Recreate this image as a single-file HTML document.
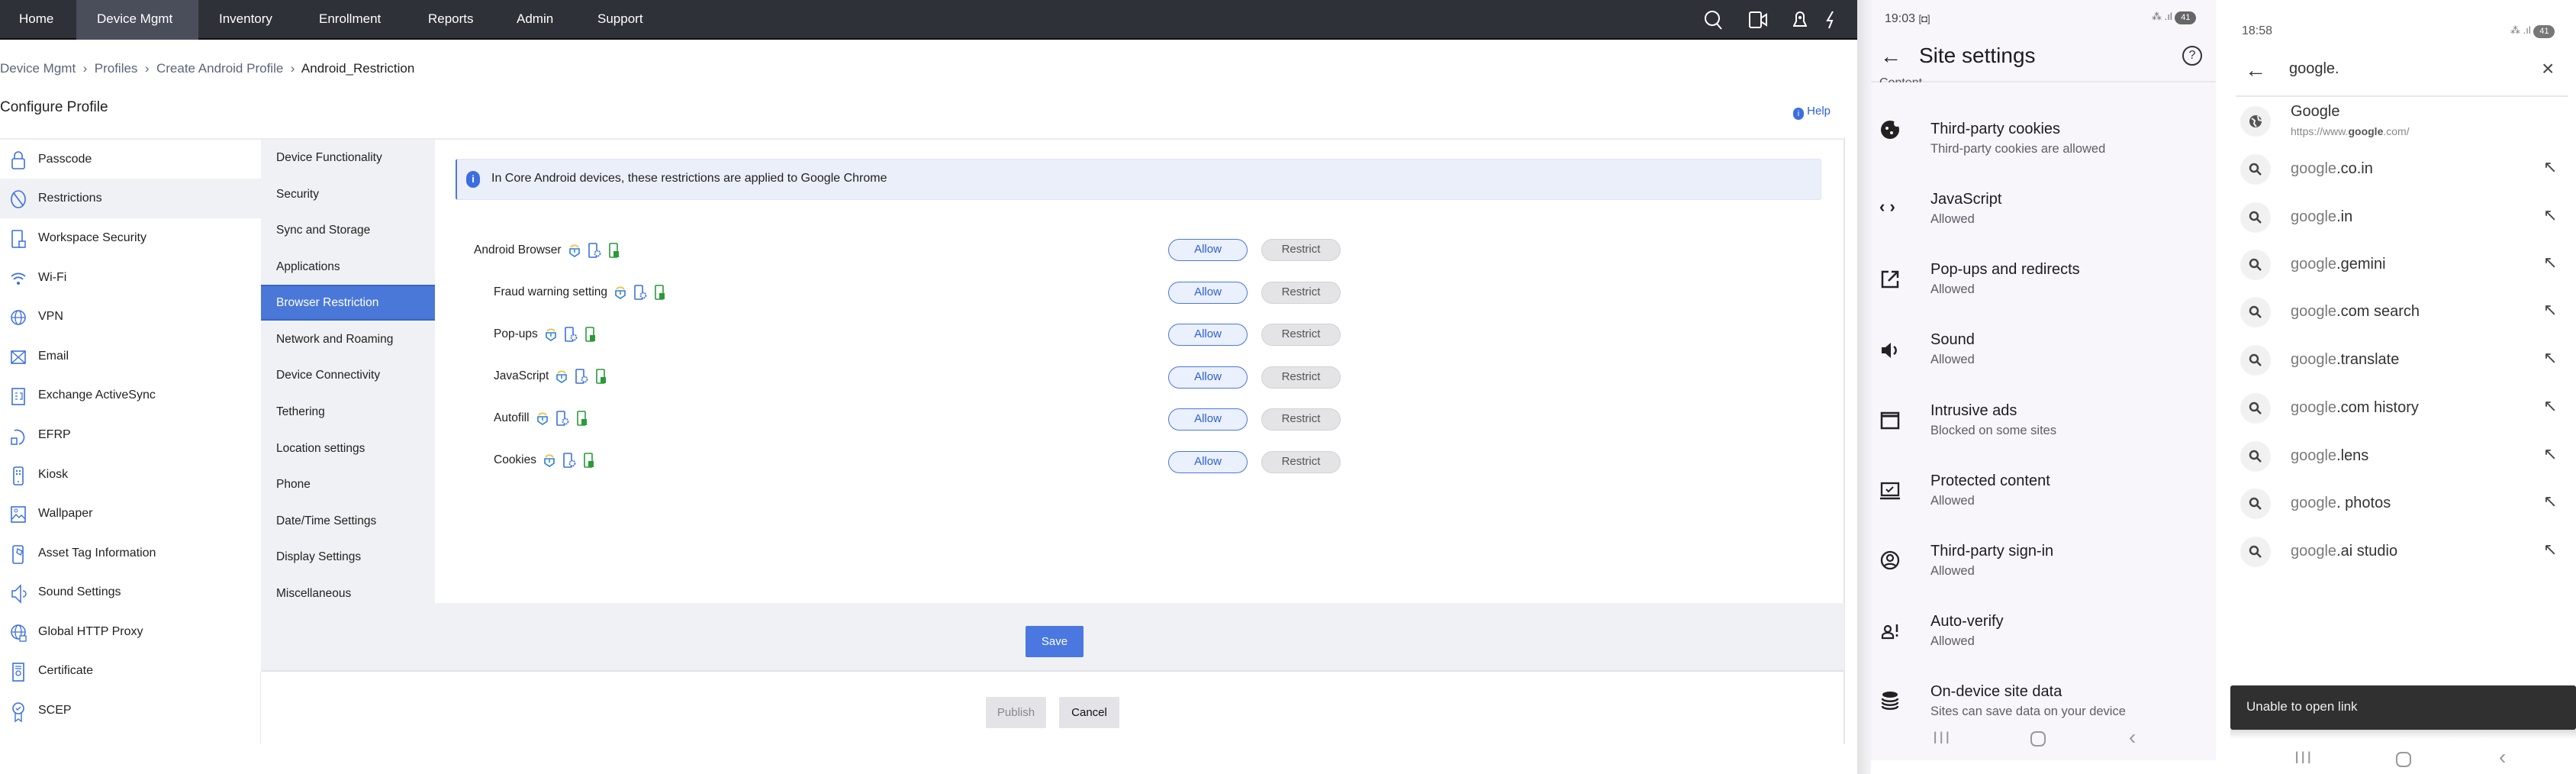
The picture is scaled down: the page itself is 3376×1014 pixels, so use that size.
<!DOCTYPE html>
<html><head><meta charset="utf-8"><style>
*{margin:0;padding:0;box-sizing:border-box}
body{width:3376px;height:1014px;position:relative;overflow:hidden;background:#fff;font-family:"Liberation Sans",sans-serif;color:#222}
.a{position:absolute;white-space:nowrap}
.nav{left:0;top:0;width:2434px;height:52px;background:#2f3138;border-bottom:2px solid #111}
.nav span{position:absolute;top:15px;color:#fff;font-size:17px}
.li{position:absolute;left:0;width:342px;height:52px;font-size:16px}
.li span{position:absolute;left:50px;top:17px}
.li svg{position:absolute;left:13px;top:14px}
.c2{position:absolute;left:342px;width:228px;height:47px;font-size:15.5px}
.c2 span{position:absolute;left:20px;top:15px}
.row{position:absolute;font-size:15.5px;height:30px}
.ic{display:inline-block;vertical-align:middle;margin-left:9px}
.btnA{position:absolute;left:1531px;width:104px;height:29px;border:1.5px solid #4a78e0;background:#eaf0fc;border-radius:15px;color:#2d5fd6;font-size:15px;text-align:center;line-height:26px}
.btnR{position:absolute;left:1653px;width:104px;height:29px;border:1.5px solid #d2d2d6;background:#e4e4e7;border-radius:15px;color:#555;font-size:15px;text-align:center;line-height:26px}
.p1t{position:absolute;left:2530px;font-size:20px;color:#1d1b20}
.p1s{position:absolute;left:2530px;font-size:16.5px;color:#5f5c66}
.sg{position:absolute;left:3002px;font-size:20px;color:#333}
.sg i{font-style:normal;color:#7a7a7a}
.cir{position:absolute;left:2936px;width:40px;height:40px;border-radius:20px;background:#f1f1f1}
.arr{position:absolute;left:3333px;font-size:22px;color:#444}
</style></head><body>

<div class="a nav">
 <div style="position:absolute;left:100px;top:0;width:160px;height:52px;background:#4a4e5a"></div>
 <span style="left:25px">Home</span>
 <span style="left:127px">Device Mgmt</span>
 <span style="left:287px">Inventory</span>
 <span style="left:418px">Enrollment</span>
 <span style="left:561px">Reports</span>
 <span style="left:677px">Admin</span>
 <span style="left:783px">Support</span>
 <svg style="position:absolute;left:2233px;top:12px" width="26" height="28" viewBox="0 0 26 28"><circle cx="11" cy="12" r="9" fill="none" stroke="#fff" stroke-width="2"/><path d="M17 19l6 7" stroke="#fff" stroke-width="2"/></svg>
 <svg style="position:absolute;left:2292px;top:14px" width="26" height="24"><rect x="1" y="2" width="15" height="20" rx="2" fill="none" stroke="#fff" stroke-width="2"/><path d="M17 9l6-4v14l-6-4" fill="none" stroke="#fff" stroke-width="2"/></svg>
 <svg style="position:absolute;left:2350px;top:14px" width="18" height="24"><path d="M9 2a5 5 0 0 1 5 5v7l3 6H1l3-6V7a5 5 0 0 1 5-5z" fill="none" stroke="#fff" stroke-width="2"/><circle cx="9" cy="9" r="2" fill="#fff"/></svg>
 <svg style="position:absolute;left:2392px;top:14px" width="14" height="24"><path d="M10 1L3 13h6l-4 10" fill="none" stroke="#fff" stroke-width="2"/></svg>
</div>

<div class="a" style="left:0;top:80px;font-size:17px;color:#5a6478">Device Mgmt &nbsp;›&nbsp; Profiles &nbsp;›&nbsp; Create Android Profile &nbsp;›&nbsp; <span style="color:#222">Android_Restriction</span></div>
<div class="a" style="left:0;top:130px;font-size:19px;color:#222">Configure Profile</div>
<div class="a" style="left:2350px;top:137px;font-size:15px;color:#2d5fd6"><span style="display:inline-block;width:14px;height:16px;border-radius:8px;background:#3b6fe0;color:#fff;font-size:11px;text-align:center;line-height:16px;vertical-align:-2px">i</span> Help</div>

<!-- panel -->
<div class="a" style="left:0;top:181px;width:2418px;height:2px;background:#ececee"></div>
<div class="a" style="left:2416px;top:181px;width:2px;height:794px;background:#e6e6e8"></div>
<div class="a" style="left:342px;top:183px;width:228px;height:607px;background:#f0f1f4"></div>
<div class="a" style="left:342px;top:790px;width:2075px;height:90px;background:#f0f1f4;border-bottom:2px solid #e2e3e7"></div>
<div class="a" style="left:341px;top:880px;width:1px;height:95px;background:#e8e8ea"></div>

<!-- left list -->
<div class="li" style="top:183px"><svg width="22" height="26"><rect x="3" y="11" width="16" height="13" rx="2" fill="none" stroke="#3b6fe0" stroke-width="1.6"/><path d="M6 11V7a5 5 0 0 1 10 0v4" fill="none" stroke="#3b6fe0" stroke-width="1.6"/></svg><span>Passcode</span></div>
<div class="li" style="top:234px;background:#f0f1f4"><svg width="22" height="26"><ellipse cx="11" cy="13" rx="9" ry="11" fill="none" stroke="#3b6fe0" stroke-width="1.6"/><path d="M5 5l12 16" stroke="#3b6fe0" stroke-width="1.6"/></svg><span>Restrictions</span></div>
<div class="li" style="top:286px"><svg width="22" height="28"><rect x="3" y="2" width="13" height="22" rx="1" fill="none" stroke="#3b6fe0" stroke-width="1.6"/><rect x="12" y="16" width="8" height="8" fill="#fff" stroke="#3b6fe0" stroke-width="1.5"/></svg><span>Workspace Security</span></div>
<div class="li" style="top:338px"><svg width="22" height="26"><path d="M2 10a13 13 0 0 1 18 0M5 14a8 8 0 0 1 12 0" fill="none" stroke="#3b6fe0" stroke-width="1.8"/><circle cx="11" cy="19" r="2" fill="#3b6fe0"/></svg><span>Wi-Fi</span></div>
<div class="li" style="top:389px"><svg width="22" height="26"><circle cx="11" cy="13" r="9" fill="none" stroke="#3b6fe0" stroke-width="1.5"/><ellipse cx="11" cy="13" rx="4" ry="9" fill="none" stroke="#3b6fe0" stroke-width="1.3"/><path d="M2 13h18" stroke="#3b6fe0" stroke-width="1.3"/></svg><span>VPN</span></div>
<div class="li" style="top:441px"><svg width="22" height="26"><rect x="2" y="5" width="18" height="16" fill="none" stroke="#3b6fe0" stroke-width="1.6"/><path d="M2 5l18 16M20 5L2 21" stroke="#3b6fe0" stroke-width="1.4"/></svg><span>Email</span></div>
<div class="li" style="top:492px"><svg width="22" height="26"><rect x="3" y="3" width="16" height="21" fill="none" stroke="#3b6fe0" stroke-width="1.6"/><path d="M7 9h3M7 13h3M7 17h3M13 9h3v8h-3" stroke="#3b6fe0" stroke-width="1.3" fill="none"/></svg><span>Exchange ActiveSync</span></div>
<div class="li" style="top:544px"><svg width="22" height="28"><path d="M6 6a8 8 0 1 1 6 18" fill="none" stroke="#3b6fe0" stroke-width="1.6"/><rect x="2" y="16" width="7" height="8" fill="none" stroke="#3b6fe0" stroke-width="1.5"/></svg><span>EFRP</span></div>
<div class="li" style="top:596px"><svg width="22" height="28"><rect x="5" y="2" width="12" height="23" rx="2" fill="none" stroke="#3b6fe0" stroke-width="1.6"/><path d="M8 6h2v2H8zM12 6h2v2h-2zM8 10h2v2H8zM12 10h2v2h-2z" fill="#3b6fe0"/><circle cx="11" cy="21" r="1" fill="#3b6fe0"/></svg><span>Kiosk</span></div>
<div class="li" style="top:647px"><svg width="22" height="26"><rect x="2" y="3" width="18" height="20" fill="none" stroke="#3b6fe0" stroke-width="1.6"/><path d="M3 19l5-6 4 4 3-3 5 5" fill="none" stroke="#3b6fe0" stroke-width="1.4"/><circle cx="8" cy="8" r="2" fill="none" stroke="#3b6fe0"/></svg><span>Wallpaper</span></div>
<div class="li" style="top:699px"><svg width="22" height="28"><rect x="4" y="2" width="13" height="23" rx="2" fill="none" stroke="#3b6fe0" stroke-width="1.6"/><path d="M10 6l6 3-2 5-5-3z" fill="none" stroke="#3b6fe0" stroke-width="1.3"/></svg><span>Asset Tag Information</span></div>
<div class="li" style="top:750px"><svg width="22" height="28"><path d="M3 10h4l7-7v22l-7-7H3z" fill="none" stroke="#3b6fe0" stroke-width="1.5"/><path d="M17 10a4 4 0 0 1 0 8" fill="none" stroke="#3b6fe0" stroke-width="1.4"/></svg><span>Sound Settings</span></div>
<div class="li" style="top:802px"><svg width="24" height="28"><circle cx="11" cy="12" r="9" fill="none" stroke="#3b6fe0" stroke-width="1.5"/><ellipse cx="11" cy="12" rx="4" ry="9" fill="none" stroke="#3b6fe0" stroke-width="1.3"/><path d="M2 12h18" stroke="#3b6fe0" stroke-width="1.3"/><rect x="13" y="17" width="8" height="7" fill="#fff" stroke="#3b6fe0" stroke-width="1.3"/></svg><span>Global HTTP Proxy</span></div>
<div class="li" style="top:853px"><svg width="22" height="28"><rect x="4" y="2" width="14" height="23" fill="none" stroke="#3b6fe0" stroke-width="1.6"/><path d="M7 6h8M7 9h8" stroke="#3b6fe0" stroke-width="1.3"/><circle cx="11" cy="15" r="3" fill="none" stroke="#3b6fe0" stroke-width="1.3"/></svg><span>Certificate</span></div>
<div class="li" style="top:905px"><svg width="22" height="30"><circle cx="11" cy="9" r="7" fill="none" stroke="#3b6fe0" stroke-width="1.6"/><path d="M7 15v11l4-3 4 3V15M8 9l2 2 4-4" fill="none" stroke="#3b6fe0" stroke-width="1.4"/></svg><span>SCEP</span></div>

<!-- second column -->
<div class="c2" style="top:183px"><span>Device Functionality</span></div>
<div class="c2" style="top:231px"><span>Security</span></div>
<div class="c2" style="top:278px"><span>Sync and Storage</span></div>
<div class="c2" style="top:326px"><span>Applications</span></div>
<div class="c2" style="top:373px;background:#4a78d8;border-top:2px solid #3a66c8;border-bottom:2px solid #3a66c8;color:#fff"><span style="top:13px">Browser Restriction</span></div>
<div class="c2" style="top:421px"><span>Network and Roaming</span></div>
<div class="c2" style="top:468px"><span>Device Connectivity</span></div>
<div class="c2" style="top:516px"><span>Tethering</span></div>
<div class="c2" style="top:564px"><span>Location settings</span></div>
<div class="c2" style="top:611px"><span>Phone</span></div>
<div class="c2" style="top:659px"><span>Date/Time Settings</span></div>
<div class="c2" style="top:706px"><span>Display Settings</span></div>
<div class="c2" style="top:754px"><span>Miscellaneous</span></div>

<!-- info box -->
<div class="a" style="left:597px;top:208px;width:1790px;height:54px;background:#ebeffa;border:1.5px solid #dde4f6;border-left:2px solid #4a78e0;border-radius:3px"></div>
<div class="a" style="left:611px;top:224px;width:18px;height:22px;border-radius:10px;background:#3b6fe0;color:#fff;font-size:13px;text-align:center;line-height:22px;font-weight:bold">i</div>
<div class="a" style="left:644px;top:225px;font-size:16px;color:#222">In Core Android devices, these restrictions are applied to Google Chrome</div>

<!-- icons template via inline svg -->
<div class="row" style="left:621px;top:317px">Android Browser<svg class="ic" width="16" height="20"><path d="M2 8h12v6l-6 4-6-4z" fill="#fff" stroke="#2d7fd6" stroke-width="1.6"/><path d="M3 6a6 6 0 0 1 10 0" fill="none" stroke="#e6c94a" stroke-width="2"/><path d="M8 9v4" stroke="#2d7fd6" stroke-width="1.5"/></svg><svg class="ic" width="18" height="22"><rect x="2" y="2" width="10" height="18" rx="1" fill="none" stroke="#3b6fe0" stroke-width="1.6"/><circle cx="13" cy="15" r="3.5" fill="#fff" stroke="#3b6fe0" stroke-width="1.8" stroke-dasharray="2 1"/></svg><svg class="ic" width="16" height="22"><rect x="2" y="2" width="10" height="18" rx="1" fill="none" stroke="#2a9a3a" stroke-width="1.6"/><rect x="7" y="12" width="7" height="8" fill="#2a9a3a"/></svg></div>
<div class="row" style="left:647px;top:372px">Fraud warning setting<svg class="ic" width="16" height="20"><path d="M2 8h12v6l-6 4-6-4z" fill="#fff" stroke="#2d7fd6" stroke-width="1.6"/><path d="M3 6a6 6 0 0 1 10 0" fill="none" stroke="#e6c94a" stroke-width="2"/><path d="M8 9v4" stroke="#2d7fd6" stroke-width="1.5"/></svg><svg class="ic" width="18" height="22"><rect x="2" y="2" width="10" height="18" rx="1" fill="none" stroke="#3b6fe0" stroke-width="1.6"/><circle cx="13" cy="15" r="3.5" fill="#fff" stroke="#3b6fe0" stroke-width="1.8" stroke-dasharray="2 1"/></svg><svg class="ic" width="16" height="22"><rect x="2" y="2" width="10" height="18" rx="1" fill="none" stroke="#2a9a3a" stroke-width="1.6"/><rect x="7" y="12" width="7" height="8" fill="#2a9a3a"/></svg></div>
<div class="row" style="left:647px;top:427px">Pop-ups<svg class="ic" width="16" height="20"><path d="M2 8h12v6l-6 4-6-4z" fill="#fff" stroke="#2d7fd6" stroke-width="1.6"/><path d="M3 6a6 6 0 0 1 10 0" fill="none" stroke="#e6c94a" stroke-width="2"/><path d="M8 9v4" stroke="#2d7fd6" stroke-width="1.5"/></svg><svg class="ic" width="18" height="22"><rect x="2" y="2" width="10" height="18" rx="1" fill="none" stroke="#3b6fe0" stroke-width="1.6"/><circle cx="13" cy="15" r="3.5" fill="#fff" stroke="#3b6fe0" stroke-width="1.8" stroke-dasharray="2 1"/></svg><svg class="ic" width="16" height="22"><rect x="2" y="2" width="10" height="18" rx="1" fill="none" stroke="#2a9a3a" stroke-width="1.6"/><rect x="7" y="12" width="7" height="8" fill="#2a9a3a"/></svg></div>
<div class="row" style="left:647px;top:482px">JavaScript<svg class="ic" width="16" height="20"><path d="M2 8h12v6l-6 4-6-4z" fill="#fff" stroke="#2d7fd6" stroke-width="1.6"/><path d="M3 6a6 6 0 0 1 10 0" fill="none" stroke="#e6c94a" stroke-width="2"/><path d="M8 9v4" stroke="#2d7fd6" stroke-width="1.5"/></svg><svg class="ic" width="18" height="22"><rect x="2" y="2" width="10" height="18" rx="1" fill="none" stroke="#3b6fe0" stroke-width="1.6"/><circle cx="13" cy="15" r="3.5" fill="#fff" stroke="#3b6fe0" stroke-width="1.8" stroke-dasharray="2 1"/></svg><svg class="ic" width="16" height="22"><rect x="2" y="2" width="10" height="18" rx="1" fill="none" stroke="#2a9a3a" stroke-width="1.6"/><rect x="7" y="12" width="7" height="8" fill="#2a9a3a"/></svg></div>
<div class="row" style="left:647px;top:537px">Autofill<svg class="ic" width="16" height="20"><path d="M2 8h12v6l-6 4-6-4z" fill="#fff" stroke="#2d7fd6" stroke-width="1.6"/><path d="M3 6a6 6 0 0 1 10 0" fill="none" stroke="#e6c94a" stroke-width="2"/><path d="M8 9v4" stroke="#2d7fd6" stroke-width="1.5"/></svg><svg class="ic" width="18" height="22"><rect x="2" y="2" width="10" height="18" rx="1" fill="none" stroke="#3b6fe0" stroke-width="1.6"/><circle cx="13" cy="15" r="3.5" fill="#fff" stroke="#3b6fe0" stroke-width="1.8" stroke-dasharray="2 1"/></svg><svg class="ic" width="16" height="22"><rect x="2" y="2" width="10" height="18" rx="1" fill="none" stroke="#2a9a3a" stroke-width="1.6"/><rect x="7" y="12" width="7" height="8" fill="#2a9a3a"/></svg></div>
<div class="row" style="left:647px;top:592px">Cookies<svg class="ic" width="16" height="20"><path d="M2 8h12v6l-6 4-6-4z" fill="#fff" stroke="#2d7fd6" stroke-width="1.6"/><path d="M3 6a6 6 0 0 1 10 0" fill="none" stroke="#e6c94a" stroke-width="2"/><path d="M8 9v4" stroke="#2d7fd6" stroke-width="1.5"/></svg><svg class="ic" width="18" height="22"><rect x="2" y="2" width="10" height="18" rx="1" fill="none" stroke="#3b6fe0" stroke-width="1.6"/><circle cx="13" cy="15" r="3.5" fill="#fff" stroke="#3b6fe0" stroke-width="1.8" stroke-dasharray="2 1"/></svg><svg class="ic" width="16" height="22"><rect x="2" y="2" width="10" height="18" rx="1" fill="none" stroke="#2a9a3a" stroke-width="1.6"/><rect x="7" y="12" width="7" height="8" fill="#2a9a3a"/></svg></div>

<div class="btnA" style="top:313px">Allow</div><div class="btnR" style="top:313px">Restrict</div>
<div class="btnA" style="top:369px">Allow</div><div class="btnR" style="top:369px">Restrict</div>
<div class="btnA" style="top:424px">Allow</div><div class="btnR" style="top:424px">Restrict</div>
<div class="btnA" style="top:480px">Allow</div><div class="btnR" style="top:480px">Restrict</div>
<div class="btnA" style="top:535px">Allow</div><div class="btnR" style="top:535px">Restrict</div>
<div class="btnA" style="top:591px">Allow</div><div class="btnR" style="top:591px">Restrict</div>

<div class="a" style="left:1344px;top:820px;width:76px;height:41px;background:#4a78e0;border-radius:2px;color:#fff;font-size:15px;text-align:center;line-height:41px">Save</div>
<div class="a" style="left:1292px;top:913px;width:79px;height:41px;background:#e4e4e8;border-radius:2px;color:#888;font-size:15px;text-align:center;line-height:41px">Publish</div>
<div class="a" style="left:1388px;top:913px;width:79px;height:41px;background:#e4e4e8;border-radius:2px;color:#111;font-size:15px;text-align:center;line-height:41px">Cancel</div>

<!-- phone 1 -->
<div class="a" style="left:2434px;top:0;width:470px;height:1014px;background:linear-gradient(90deg,#e2e2e4 0,#ececef 10px,#f8f6fb 22px)"></div>
<div class="a" style="left:2452px;top:996px;width:452px;height:18px;background:#fff"></div>
<div class="a" style="left:2470px;top:16px;font-size:16px;color:#444">19:03 <span style="font-size:13px">[◘]</span></div>
<div class="a" style="left:2820px;top:14px;font-size:13px;color:#666">⁂ .ıl <span style="display:inline-block;width:28px;height:17px;border-radius:9px;background:#666;color:#fff;font-size:11px;text-align:center;line-height:17px">41</span></div>
<div class="a" style="left:2464px;top:58px;font-size:28px;color:#222">←</div>
<div class="a" style="left:2515px;top:57px;font-size:28px;color:#1d1b20">Site settings</div>
<div class="a" style="left:2860px;top:60px;width:26px;height:26px;border:2px solid #333;border-radius:13px;font-size:16px;text-align:center;line-height:22px;color:#333">?</div>
<div class="a" style="left:2452px;top:106px;width:452px;height:2px;background:#e8e6ee"></div>
<div class="a" style="left:2463px;top:100px;font-size:16px;color:#555;height:8px;overflow:hidden">Content</div>

<svg class="a" style="left:2464px;top:157px" width="26" height="26"><circle cx="13" cy="13" r="12" fill="#222"/><circle cx="9" cy="11" r="2" fill="#f8f6fb"/><circle cx="15" cy="17" r="2" fill="#f8f6fb"/><circle cx="22" cy="5" r="4" fill="#f8f6fb"/></svg>
<div class="p1t" style="top:158px">Third-party cookies</div><div class="p1s" style="top:186px">Third-party cookies are allowed</div>
<div class="a" style="left:2463px;top:258px;font-size:22px;font-weight:bold;color:#222">‹ ›</div>
<div class="p1t" style="top:250px">JavaScript</div><div class="p1s" style="top:278px">Allowed</div>
<svg class="a" style="left:2464px;top:353px" width="26" height="26"><path d="M11 3H3v20h20v-8M15 3h8v8M23 3L11 15" fill="none" stroke="#222" stroke-width="2.5"/></svg>
<div class="p1t" style="top:342px">Pop-ups and redirects</div><div class="p1s" style="top:370px">Allowed</div>
<svg class="a" style="left:2464px;top:446px" width="26" height="26"><path d="M2 9h5l7-6v20l-7-6H2z" fill="#222"/><path d="M18 8a6 6 0 0 1 0 10" fill="none" stroke="#222" stroke-width="2.5"/></svg>
<div class="p1t" style="top:434px">Sound</div><div class="p1s" style="top:462px">Allowed</div>
<svg class="a" style="left:2464px;top:538px" width="26" height="26"><rect x="2" y="3" width="22" height="20" fill="none" stroke="#222" stroke-width="2.5"/><path d="M2 7h22" stroke="#222" stroke-width="3"/></svg>
<div class="p1t" style="top:527px">Intrusive ads</div><div class="p1s" style="top:555px">Blocked on some sites</div>
<svg class="a" style="left:2463px;top:630px" width="28" height="26"><rect x="3" y="3" width="22" height="16" fill="none" stroke="#222" stroke-width="2.3"/><path d="M1 23h26" stroke="#222" stroke-width="2.5"/><path d="M9 11l3 3 6-6" fill="none" stroke="#222" stroke-width="2"/></svg>
<div class="p1t" style="top:619px">Protected content</div><div class="p1s" style="top:647px">Allowed</div>
<svg class="a" style="left:2464px;top:721px" width="26" height="26"><circle cx="13" cy="13" r="11" fill="none" stroke="#222" stroke-width="2.3"/><circle cx="13" cy="10" r="4" fill="none" stroke="#222" stroke-width="2.2"/><path d="M6 20a9 6 0 0 1 14 0" fill="none" stroke="#222" stroke-width="2.2"/></svg>
<div class="p1t" style="top:711px">Third-party sign-in</div><div class="p1s" style="top:739px">Allowed</div>
<svg class="a" style="left:2464px;top:815px" width="26" height="26"><circle cx="10" cy="9" r="4" fill="none" stroke="#222" stroke-width="2.2"/><path d="M3 21v-3a7 4 0 0 1 14 0v3z" fill="none" stroke="#222" stroke-width="2.2"/><path d="M22 3v10M22 16v3" stroke="#222" stroke-width="2.5"/></svg>
<div class="p1t" style="top:803px">Auto-verify</div><div class="p1s" style="top:831px">Allowed</div>
<svg class="a" style="left:2464px;top:904px" width="26" height="26"><ellipse cx="13" cy="6" rx="10" ry="4" fill="#222"/><path d="M3 11c0 5 20 5 20 0M3 16c0 5 20 5 20 0M3 21c0 5 20 5 20 0" fill="none" stroke="#222" stroke-width="2.5"/></svg>
<div class="p1t" style="top:895px">On-device site data</div><div class="p1s" style="top:923px">Sites can save data on your device</div>
<div class="a" style="left:2533px;top:954px;font-size:22px;color:#999;letter-spacing:2px">III</div>
<div class="a" style="left:2661px;top:958px;width:20px;height:20px;border:2px solid #999;border-radius:7px"></div>
<div class="a" style="left:2790px;top:950px;font-size:28px;color:#999">‹</div>

<!-- phone 2 -->
<div class="a" style="left:2938px;top:32px;font-size:16px;color:#555">18:58</div>
<div class="a" style="left:3290px;top:32px;font-size:13px;color:#777">⁂ .ıl <span style="display:inline-block;width:28px;height:17px;border-radius:9px;background:#777;color:#fff;font-size:11px;text-align:center;line-height:17px">41</span></div>
<div class="a" style="left:2942px;top:76px;font-size:28px;color:#333">←</div>
<div class="a" style="left:3000px;top:79px;font-size:20px;color:#333">google.</div>
<div class="a" style="left:3331px;top:74px;font-size:28px;color:#444">×</div>
<div class="a" style="left:2930px;top:125px;width:436px;height:2px;background:#e8e8e8"></div>

<div class="cir" style="top:139px"></div>
<svg class="a" style="left:2946px;top:149px" width="20" height="20"><circle cx="10" cy="10" r="8" fill="#555"/><path d="M5 6l4 3-1 4 3 4M13 3l1 5 4 1" fill="none" stroke="#f1f1f1" stroke-width="2"/></svg>
<div class="a" style="left:3002px;top:135px;font-size:20px;color:#333">Google</div>
<div class="a" style="left:3002px;top:164px;font-size:14px;color:#888">https://www.<b style="color:#555">google</b>.com/</div>

<div class="cir" style="top:202px"></div><div class="sg" style="top:210px"><i>google</i>.co.in</div><div class="arr" style="top:206px">↖</div>
<div class="cir" style="top:265px"></div><div class="sg" style="top:273px"><i>google</i>.in</div><div class="arr" style="top:269px">↖</div>
<div class="cir" style="top:327px"></div><div class="sg" style="top:335px"><i>google</i>.gemini</div><div class="arr" style="top:331px">↖</div>
<div class="cir" style="top:389px"></div><div class="sg" style="top:397px"><i>google</i>.com search</div><div class="arr" style="top:393px">↖</div>
<div class="cir" style="top:452px"></div><div class="sg" style="top:460px"><i>google</i>.translate</div><div class="arr" style="top:456px">↖</div>
<div class="cir" style="top:515px"></div><div class="sg" style="top:523px"><i>google</i>.com history</div><div class="arr" style="top:519px">↖</div>
<div class="cir" style="top:578px"></div><div class="sg" style="top:586px"><i>google</i>.lens</div><div class="arr" style="top:582px">↖</div>
<div class="cir" style="top:640px"></div><div class="sg" style="top:648px"><i>google</i>. photos</div><div class="arr" style="top:644px">↖</div>
<div class="cir" style="top:703px"></div><div class="sg" style="top:711px"><i>google</i>.ai studio</div><div class="arr" style="top:707px">↖</div>
<svg class="a" style="left:2946px;top:212px" width="20" height="530"><g fill="none" stroke="#444" stroke-width="2.5"><circle cx="8" cy="8" r="5"/><path d="M12 12l5 5"/></g><g transform="translate(0,63)" fill="none" stroke="#444" stroke-width="2.5"><circle cx="8" cy="8" r="5"/><path d="M12 12l5 5"/></g><g transform="translate(0,125)" fill="none" stroke="#444" stroke-width="2.5"><circle cx="8" cy="8" r="5"/><path d="M12 12l5 5"/></g><g transform="translate(0,187)" fill="none" stroke="#444" stroke-width="2.5"><circle cx="8" cy="8" r="5"/><path d="M12 12l5 5"/></g><g transform="translate(0,250)" fill="none" stroke="#444" stroke-width="2.5"><circle cx="8" cy="8" r="5"/><path d="M12 12l5 5"/></g><g transform="translate(0,313)" fill="none" stroke="#444" stroke-width="2.5"><circle cx="8" cy="8" r="5"/><path d="M12 12l5 5"/></g><g transform="translate(0,376)" fill="none" stroke="#444" stroke-width="2.5"><circle cx="8" cy="8" r="5"/><path d="M12 12l5 5"/></g><g transform="translate(0,438)" fill="none" stroke="#444" stroke-width="2.5"><circle cx="8" cy="8" r="5"/><path d="M12 12l5 5"/></g><g transform="translate(0,501)" fill="none" stroke="#444" stroke-width="2.5"><circle cx="8" cy="8" r="5"/><path d="M12 12l5 5"/></g></svg>

<div class="a" style="left:2923px;top:898px;width:453px;height:58px;background:#303030;border-radius:3px"></div>
<div class="a" style="left:2944px;top:916px;font-size:17px;color:#eee">Unable to open link</div>
<div class="a" style="left:2923px;top:956px;width:453px;height:12px;background:linear-gradient(#ddd,#fff)"></div>
<div class="a" style="left:3007px;top:980px;font-size:22px;color:#999;letter-spacing:2px">III</div>
<div class="a" style="left:3140px;top:985px;width:20px;height:20px;border:2px solid #999;border-radius:7px"></div>
<div class="a" style="left:3275px;top:976px;font-size:28px;color:#999">‹</div>
</body></html>
